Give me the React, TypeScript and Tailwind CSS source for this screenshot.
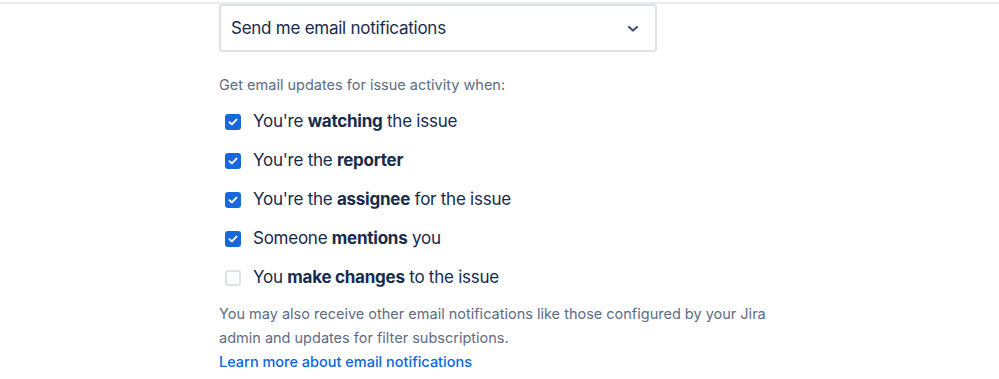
import React from 'react';

const items = [
  { pre: "You're ", bold: 'watching', post: ' the issue', checked: true },
  { pre: "You're the ", bold: 'reporter', post: '', checked: true },
  { pre: "You're the ", bold: 'assignee', post: ' for the issue', checked: true },
  { pre: 'Someone ', bold: 'mentions', post: ' you', checked: true },
  { pre: 'You ', bold: 'make changes', post: ' to the issue', checked: false },
];

function Checkbox({ checked }: { checked: boolean }) {
  if (!checked) {
    return <span className="w-4 h-4 rounded-[3px] border-2 border-[#dfe1e6] bg-[#fafbfc] shrink-0" />;
  }
  return (
    <span className="w-4 h-4 rounded-[3px] bg-[#1868db] shrink-0 flex items-center justify-center">
      <svg width="10" height="8" viewBox="0 0 10 8" fill="none">
        <path d="M1.5 4.2 L3.9 6.4 L8.5 1.6" stroke="white" strokeWidth="1.9" strokeLinecap="round" strokeLinejoin="round" />
      </svg>
    </span>
  );
}

export default function App() {
  return (
    <div className="w-[999px] h-[379px] bg-white overflow-hidden text-[#172b4d]" style={{ fontFamily: 'Inter, "Liberation Sans", sans-serif' }}>
      <div className="h-[2px] mt-[2px] bg-[#ebecf0]" />
      <div className="pl-[219px]">
        {/* Select */}
        <div className="w-[438px] h-[48px] border-2 border-[#dfe1e6] rounded-[3px] bg-white flex items-center justify-between pl-[10px] pr-[16px] pt-[2px]">
          <span className="text-[17px] tracking-[-0.25px]">Send me email notifications</span>
          <svg width="12" height="8" viewBox="0 0 12 8" fill="none">
            <path d="M2 2 L6 5.5 L10 2" stroke="#42526e" strokeWidth="2.2" strokeLinecap="round" strokeLinejoin="round" />
          </svg>
        </div>

        <p className="mt-[23px] text-[14.5px] text-[#5e6c84] leading-[20px]">Get email updates for issue activity when:</p>

        <div className="mt-[16px] flex flex-col gap-[17px]">
          {items.map((it, i) => (
            <label key={i} className="flex items-center gap-[12px] pl-[6px] h-[22px] text-[17px] tracking-[-0.25px]">
              <Checkbox checked={it.checked} />
              <span>
                {it.pre}
                <span className="font-bold">{it.bold}</span>
                {it.post}
              </span>
            </label>
          ))}
        </div>

        <p className="mt-[13px] w-[570px] text-[14.5px] leading-[24px] text-[#5e6c84]">
          You may also receive other email notifications like those configured by your Jira admin and updates for filter subscriptions.
        </p>
        <a className="block text-[14.5px] leading-[24px] text-[#0c66e4] font-medium">Learn more about email notifications</a>
      </div>
    </div>
  );
}
